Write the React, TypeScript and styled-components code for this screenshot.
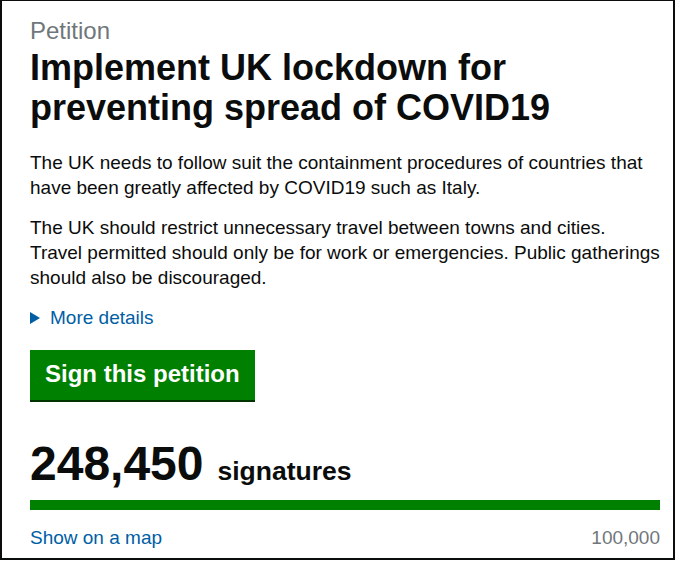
import styled, { createGlobalStyle } from "styled-components";

const GlobalStyle = createGlobalStyle`
  body {
    margin: 0;
    background: #ffffff;
    font-family: "Liberation Sans", Arial, sans-serif;
    color: #0b0c0c;
  }
`;

const Panel = styled.div`
  box-sizing: border-box;
  width: 675px;
  height: 560px;
  border: 2px solid #0b0c0c;
  border-top-width: 1px;
  padding: 17px 13px 0 28px;
  display: flex;
  flex-direction: column;
`;

const Caption = styled.span`
  font-size: 24px;
  line-height: 25px;
  color: #6f777b;
`;

const Title = styled.h1`
  margin: 5px 0 22px;
  font-size: 36px;
  line-height: 40px;
  font-weight: 700;
`;

const Body = styled.p`
  margin: 0 0 15px;
  font-size: 19px;
  line-height: 25px;
`;

const Details = styled.div`
  display: flex;
  align-items: center;
  gap: 10px;
  font-size: 19px;
  line-height: 25px;
  color: #005ea5;
  margin-bottom: 20px;
`;

const Arrow = styled.span`
  width: 0;
  height: 0;
  border-top: 6px solid transparent;
  border-bottom: 6px solid transparent;
  border-left: 10px solid #005ea5;
`;

const SignButton = styled.button`
  align-self: flex-start;
  border: 0;
  margin: 0;
  background: #008000;
  color: #ffffff;
  font-family: inherit;
  font-size: 24px;
  font-weight: 700;
  line-height: 30px;
  padding: 9px 15px 11px;
  box-shadow: 0 2px 0 #003300;
  cursor: pointer;
`;

const Count = styled.div`
  margin-top: 39px;
  display: flex;
  align-items: baseline;
  gap: 14px;
  line-height: 50px;
`;

const Number = styled.span`
  font-size: 48px;
  font-weight: 700;
`;

const Label = styled.span`
  font-size: 26.5px;
  font-weight: 700;
`;

const Track = styled.div`
  margin-top: 4px;
  height: 10px;
  background: #dee0e2;
`;

const Fill = styled.div`
  height: 100%;
  background: #008000;
`;

const Footer = styled.div`
  margin-top: 15px;
  display: flex;
  justify-content: space-between;
  font-size: 19px;
  line-height: 25px;
`;

const MapLink = styled.a`
  color: #005ea5;
  text-decoration: none;
`;

const Goal = styled.span`
  color: #6f777b;
`;

export default function App() {
  const signatures = 248450;
  const goal = 100000;
  const pct = Math.min(100, (signatures / goal) * 100);

  return (
    <>
      <GlobalStyle />
      <Panel>
        <Caption>Petition</Caption>
        <Title>
          Implement UK lockdown for
          <br />
          preventing spread of COVID19
        </Title>
        <Body>
          The UK needs to follow suit the containment procedures of countries
          that have been greatly affected by COVID19 such as Italy.
        </Body>
        <Body>
          The UK should restrict unnecessary travel between towns and cities.
          Travel permitted should only be for work or emergencies. Public
          gatherings should also be discouraged.
        </Body>
        <Details>
          <Arrow />
          More details
        </Details>
        <SignButton>Sign this petition</SignButton>
        <Count>
          <Number>{signatures.toLocaleString("en-GB")}</Number>
          <Label>signatures</Label>
        </Count>
        <Track>
          <Fill style={{ width: `${pct}%` }} />
        </Track>
        <Footer>
          <MapLink href="#">Show on a map</MapLink>
          <Goal>{goal.toLocaleString("en-GB")}</Goal>
        </Footer>
      </Panel>
    </>
  );
}
